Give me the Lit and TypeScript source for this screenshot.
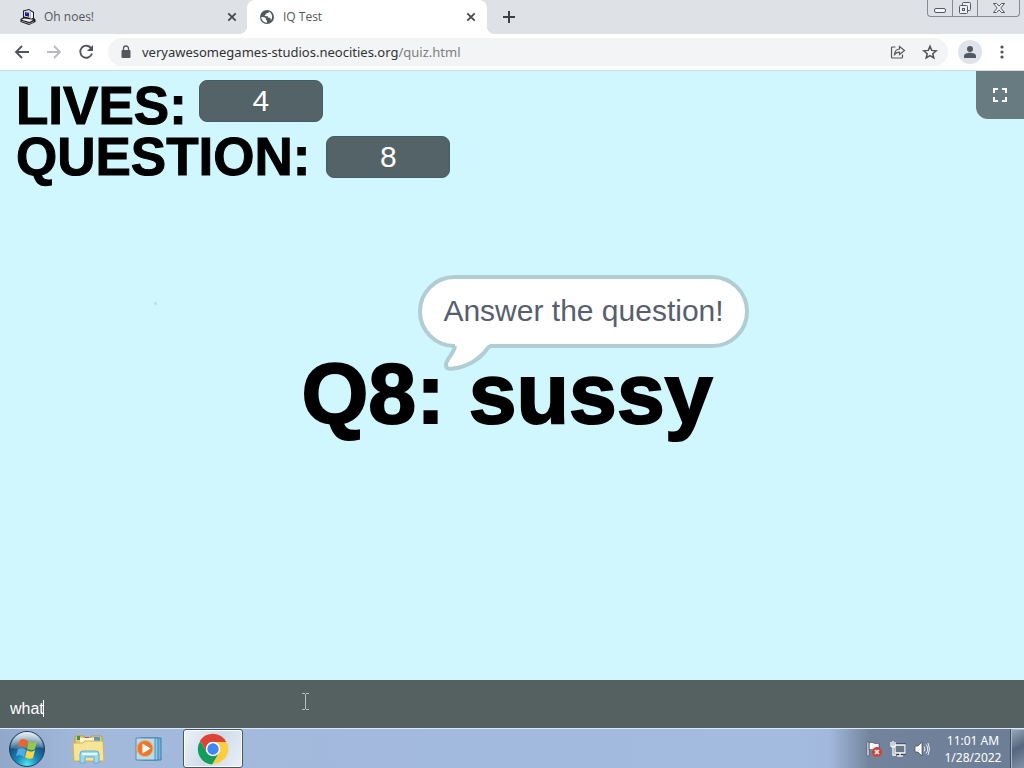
import { LitElement, html, css, svg } from "lit";
import { customElement, state } from "lit/decorators.js";

const closeIcon = html`<svg width="16" height="16" viewBox="0 0 16 16"><path d="M4.3 4.3l7.4 7.4M11.7 4.3l-7.4 7.4" stroke="#45484c" stroke-width="1.8"/></svg>`;

@customElement("browser-tabs")
class BrowserTabs extends LitElement {
  static styles = css`
    :host { display: flex; align-items: stretch; height: 34px; background: #dee1e6; color: #54575b;
      font: 12px/16px "Open Sans", "Noto Sans", sans-serif; }
    button { border: 0; padding: 0; margin: 0; background: none; font: inherit; color: inherit; display: flex; align-items: center; justify-content: center; }
    .tab { display: flex; align-items: center; gap: 8px; flex: 0 1 240px; min-width: 80px; box-sizing: border-box; padding: 0 8px 0 12px; }
    .first { flex-basis: 247px; padding-left: 20px; padding-right: 7px; }
    .active { background: #fff; border-radius: 8px 8px 0 0; position: relative; }
    .active::before, .active::after { content: ""; position: absolute; bottom: 0; width: 8px; height: 8px; }
    .active::before { left: -8px; background: radial-gradient(circle at 0 0, transparent 8px, #fff 8px); }
    .active::after { right: -8px; background: radial-gradient(circle at 100% 0, transparent 8px, #fff 8px); }
    .title { flex: 1; text-align: left; white-space: nowrap; overflow: hidden; }
    .new { width: 28px; margin-left: 8px; }
    .spacer { flex: 1; }
    .window { display: flex; height: 16px; margin-right: 4px; border: 1px solid #868a91; border-top: 0; border-radius: 0 0 4px 4px; }
    .window button { width: 25px; border-right: 1px solid #868a91; }
    .window button:last-child { width: 41px; border-right: 0; }
    svg { display: block; flex: none; }
  `;
  render() {
    return html`
      <div class="tab first">
        <svg width="16" height="16" viewBox="0 0 16 16">
          <path d="M3 1.500L9 0l5 3v6l1.500 1.500V13L9 16 .5 13v-3L3 8.500z" fill="#1c1c24"/>
          <path d="M4 2.200L9 1l1.500 1v7L4 7.500z" fill="#dcdce0"/><path d="M10.500 2L13 3.700v5L10.500 10z" fill="#f4f4f6"/>
          <path d="M5 3l4 .7v4L5 6.800z" fill="#181893"/><path d="M6 4h1.500" stroke="#8d8de0"/>
          <path d="M1.500 10.700L4 9.500l9.500 1.300L9.500 13z" fill="#eeeef1"/><path d="M1.500 11.800l8 2.500 4.500-2v.8L9.500 15l-8-2.500z" fill="#b8b8c0"/>
        </svg>
        <span class="title">Oh noes!</span><button aria-label="Close Oh noes!">${closeIcon}</button>
      </div>
      <div class="tab active">
        <svg width="16" height="16" viewBox="0 0 16 16"><circle cx="8" cy="8" r="7" fill="#54585d"/>
          <path d="M2.200 8c2 .1 3.600 .1 4.400 1 .5.600-.1 1.600.8 2.100.6.300.6 1.200.5 2.700A5.900 5.900 0 0 1 2.200 8zM10 2.500c-.1 1.200-.8 1.500-1.800 1.600-.9 0-1 .6-1 1.300-.6.200-1.400.1-1.500.9 0 .9 1 .9 2.200.9 1.300 0 1.400.7 1.400 1.600.8.100 2-.1 2.300.8.200.6.200 1.100.2 1.800A5.900 5.900 0 0 0 10 2.500z" fill="#fff"/></svg>
        <span class="title">IQ Test</span><button aria-label="Close IQ Test">${closeIcon}</button>
      </div>
      <button class="new" aria-label="New tab"><svg width="16" height="16" viewBox="0 0 16 16"><path d="M8 2v12M2 8h12" stroke="#3c4043" stroke-width="2"/></svg></button>
      <div class="spacer"></div>
      <div class="window">
        <button aria-label="Minimize"><svg width="14" height="16" viewBox="0 0 14 16"><rect x="1.500" y="8.500" width="11" height="4" rx="1.500" fill="#f4f5f7" stroke="#555961"/></svg></button>
        <button aria-label="Restore"><svg width="14" height="16" viewBox="0 0 14 16" fill="#eef0f3" stroke="#555961"><rect x="4.500" y="2.500" width="8" height="8" rx="1"/><rect x="1.500" y="5.500" width="8" height="8" rx="1"/><rect x="4.500" y="8.500" width="2" height="2"/></svg></button>
        <button aria-label="Close window"><svg width="14" height="16" viewBox="0 0 14 16"><path d="M1.500 3.500h3L7 6.200l2.500-2.700h3L8.800 8l3.700 4.500h-3L7 9.800l-2.500 2.700h-3L5.200 8z" fill="#f4f5f7" stroke="#555961"/></svg></button>
      </div>`;
  }
}

@customElement("browser-toolbar")
class BrowserToolbar extends LitElement {
  static styles = css`
    :host { display: flex; align-items: center; height: 36px; padding: 0 10px; background: #fff; border-bottom: 1px solid #d5dfe1; }
    button { border: 0; padding: 0; background: none; width: 24px; height: 24px; display: flex; align-items: center; justify-content: center; }
    .nav { display: flex; gap: 8px; margin-right: 10px; }
    .omni { flex: 1; min-width: 0; height: 28px; border-radius: 14px; background: #f3f4f5; display: flex; align-items: center; padding: 0 6px 0 10px; gap: 8px; }
    .url { flex: 1; min-width: 0; overflow: hidden; color: #303236; text-decoration: none; white-space: nowrap; font: 13px/18px "Noto Sans", "Open Sans", sans-serif; }
    .path { color: #7b7e82; }
    .person { margin: 0 8px 0 10px; border-radius: 12px; background: #dfe3ea; }
    svg { display: block; flex: none; }
  `;
  render() {
    return html`
      <div class="nav">
        <button aria-label="Back"><svg width="18" height="18" viewBox="0 0 18 18" fill="none" stroke="#505357" stroke-width="1.800"><path d="M16 9H3M9 3L3 9l6 6"/></svg></button>
        <button aria-label="Forward" disabled><svg width="18" height="18" viewBox="0 0 18 18" fill="none" stroke="#b8babd" stroke-width="1.800"><path d="M2 9h13M9 3l6 6-6 6"/></svg></button>
        <button aria-label="Reload"><svg width="18" height="18" viewBox="0 0 18 18"><path d="M14.200 5.300A6 6 0 1 0 15 10.500" fill="none" stroke="#505357" stroke-width="1.800"/><path d="M16 2v6h-6z" fill="#505357"/></svg></button>
      </div>
      <div class="omni">
        <svg width="16" height="16" viewBox="0 0 16 16"><rect x="3.500" y="6" width="9" height="8" rx="1" fill="#54575b"/><path d="M5.500 7V4.500a2.500 2.500 0 0 1 5 0V7" stroke="#54575b" stroke-width="1.300" fill="none"/></svg>
        <a class="url" href="#quiz">veryawesomegames-studios.neocities.org<span class="path">/quiz.html</span></a>
        <button aria-label="Share"><svg width="16" height="16" viewBox="0 0 16 16" fill="none" stroke="#55585c" stroke-width="1.200"><path d="M5.500 3H2.500q-1 0-1 1v9q0 1 1 1h9q1 0 1-1v-2.500"/><path d="M4.500 10.500c.3-3.500 2-5.300 5-5.500V2.500L14.500 6.500l-5 4V8.200c-2.200 0-3.600.8-5 2.300z"/></svg></button>
        <button aria-label="Bookmark"><svg width="16" height="16" viewBox="0 0 16 16" fill="none" stroke="#505357" stroke-width="1.500"><path d="M8 2.300l1.700 4.100 4.500.4-3.400 2.900 1 4.300L8 11.700 4.200 14l1-4.300-3.400-2.900 4.500-.4z"/></svg></button>
      </div>
      <button class="person" aria-label="Profile"><svg width="16" height="16" viewBox="0 0 16 16" fill="#525963"><circle cx="8" cy="5" r="3"/><path d="M2 14v-2c0-2 3-3.200 6-3.200s6 1.200 6 3.200v2z"/></svg></button>
      <button aria-label="Menu"><svg width="4" height="16" viewBox="0 0 4 16" fill="#505357"><circle cx="2" cy="3" r="1.600"/><circle cx="2" cy="8" r="1.600"/><circle cx="2" cy="13" r="1.600"/></svg></button>`;
  }
}

@customElement("quiz-stage")
class QuizStage extends LitElement {
  @state() lives = 4;
  @state() question = 8;
  static styles = css`
    :host { display: flex; flex-direction: column; flex: 1; min-height: 0; background: #d0f6fe; position: relative; overflow: hidden; }
    .stats { padding: 9px 16px 0; color: #000; font: bold 53px/50px "Liberation Sans", Arial, sans-serif; }
    .stat { display: flex; align-items: center; gap: 12px; height: 52px; -webkit-text-stroke: 1px #000; }
    .value { box-sizing: border-box; width: 124px; height: 42px; border: 1px solid #455d66; border-radius: 8px; background: #536367; color: #fff;
      text-align: center; font: 30px/40px "Liberation Sans", Arial, sans-serif; -webkit-text-stroke: 0; }
    .stat:first-child .value { align-self: flex-start; }
    .stat:last-child { gap: 16px; height: 50px; }
    .full { position: absolute; top: 0; right: 0; width: 48px; height: 48px; padding: 0; border: 0; border-radius: 0 0 0 12px; background: #687b80; display: flex; align-items: center; justify-content: center; }
    .center { flex: 1; display: flex; justify-content: center; align-items: flex-start; padding: 163px 10px 0 0; }
    .prompt { position: relative; }
    h1 { margin: 0; color: #000; font: bold 86px/96px "Liberation Sans", Arial, sans-serif; white-space: nowrap; -webkit-text-stroke: 2px #000; }
    .bubble { position: absolute; left: 117px; bottom: 93px; box-sizing: border-box; height: 73px; padding: 0 21px; border: 4px solid #b0cdd2; border-radius: 37px;
      background: #fff; color: #575e6e; font: 30px/64px "Liberation Sans", Arial, sans-serif; white-space: nowrap; }
    .tail { position: absolute; left: 20px; top: 64px; }
    .speck { position: absolute; left: 15%; top: 38%; width: 3px; height: 3px; border-radius: 2px; background: #b8dfe8; }
  `;
  render() {
    return html`
      <div class="stats">
        <div class="stat"><span>LIVES:</span><span class="value">${this.lives}</span></div>
        <div class="stat"><span>QUESTION:</span><span class="value">${this.question}</span></div>
      </div>
      <div class="center">
        <div class="prompt">
          <h1>Q${this.question}: sussy</h1>
          <div class="bubble">Answer the question!
            <svg class="tail" width="54" height="30" viewBox="0 0 54 30"><path d="M13 3C12 11 4 16 4 22c0 4 3 4 7 3C25 24 38 17 46 5l3-5H13z" fill="#fff"/><path d="M13 3C12 11 4 16 4 22c0 4 3 4 7 3.500C25 24 38 16 45 6q2-3 5-3" fill="none" stroke="#b0cdd2" stroke-width="4"/></svg>
          </div>
        </div>
      </div>
      <span class="speck"></span>
      <button class="full" aria-label="Full screen"><svg width="16" height="16" viewBox="0 0 16 16" fill="none" stroke="#fff" stroke-width="2"><path d="M2 6V2h4M10 2h4v4M14 10v4h-4M6 14H2v-4"/></svg></button>`;
  }
}

@customElement("answer-bar")
class AnswerBar extends LitElement {
  static styles = css`
    :host { display: block; height: 48px; background: #546160; position: relative; box-sizing: border-box; padding: 17px 10px 7px; }
    input { display: block; width: 100%; height: 24px; padding: 0; border: 0; outline: 0; background: none; color: #fff; font: 16px/24px "Liberation Sans", Arial, sans-serif; }
    .caret { position: absolute; left: 43px; top: 20px; width: 1px; height: 17px; background: #fff; }
    .pointer { position: absolute; left: 301px; top: 13px; }
  `;
  render() {
    return html`<input aria-label="Answer" value="what" /><span class="caret"></span>
      <svg class="pointer" width="9" height="17" viewBox="0 0 9 17"><path d="M1 .5h3M5 .5h3M4.500 1v15M1 16.500h3M5 16.500h3" stroke="#b4c0bf" fill="none"/></svg>`;
  }
}

const sector = (angle: number, color: string) =>
  svg`<path d="M16 16m-6.100 3.500L3 7.500A15.200 15.200 0 0 1 29.200 8.900H16A7.100 7.100 0 0 0 9.900 19.500z" fill=${color} transform="rotate(${angle} 16 16)"/>`;

@customElement("task-bar")
class TaskBar extends LitElement {
  static styles = css`
    :host { display: flex; align-items: stretch; height: 40px; box-sizing: border-box; border-top: 1px solid #dce9fb; color: #fff;
      background: linear-gradient(90deg, #92a8cb, #a3b9dc 8%, #a2bbdf 78%, #a2b9dd 81%, #72839b 85%, #6c7e95); }
    button { border: 0; padding: 0; background: none; display: flex; align-items: center; justify-content: center; }
    .start { width: 54px; }
    .explorer { width: 70px; }
    .media { width: 50px; margin-right: 9px; }
    .chrome { width: 60px; border: 1px solid #46566e; border-radius: 3px; background: linear-gradient(120deg, #edf2f8, #cfdbe9 50%, #eaf0f7); box-shadow: inset 0 0 0 1px #fff; }
    .spacer { flex: 1; }
    .tray { display: flex; align-items: center; gap: 8px; }
    .clock { width: 74px; margin-left: 6px; text-align: center; font: 12px/17px "Noto Sans", "Open Sans", sans-serif; align-self: center; }
    .desktop { width: 14px; border-left: 1px solid #3f4d60; background: linear-gradient(150deg, #9aa9bb, #56677d 50%, #8092a8); box-shadow: inset 1px 1px 0 #a7b7ca; }
    svg { display: block; flex: none; }
  `;
  render() {
    return html`
      <button class="start" aria-label="Start"><svg width="38" height="38" viewBox="0 0 38 38">
        <defs><radialGradient id="orb" cx=".5" cy=".95" r=".9"><stop offset="0" stop-color="#55e5ef"/><stop offset=".35" stop-color="#168ab8"/><stop offset=".7" stop-color="#16527f"/><stop offset="1" stop-color="#7da4bd"/></radialGradient>
        <linearGradient id="shine" x2="0" y2="1"><stop offset="0" stop-color="#fff" stop-opacity=".8"/><stop offset="1" stop-color="#fff" stop-opacity=".15"/></linearGradient></defs>
        <circle cx="19" cy="19" r="17.500" fill="url(#orb)" stroke="#283c5d"/><path d="M3 18a16 16 0 0 1 32 0c-9-3-20 3-32 0z" fill="url(#shine)"/>
        <path d="M12 10c3-2 5-1 8 1l-2 7c-3-2-5-2-8-1z" fill="#ee632b"/><path d="M21 11c3 2 5 2 8 0l-2 8c-3 2-5 1-8 0z" fill="#97c947"/><path d="M10 19c3-1 5-1 8 1l-2 7c-3-2-5-2-8-1z" fill="#51a9e7"/><path d="M19 20c3 2 5 2 8 0l-2 8c-3 1-5 1-8-1z" fill="#ffd443"/></svg></button>
      <button class="explorer" aria-label="Explorer"><svg width="34" height="32" viewBox="0 0 34 32">
        <path d="M3 8V3h9l2 3h5V3h11v25H3z" fill="#e9cd70" stroke="#ba9b46"/><path d="M5 3h3v4H5z" fill="#389657"/><path d="M13 4h4v4h-4z" fill="#d84b35"/><path d="M22 4h6v4h-6z" fill="#5398d3"/><path d="M8 5h14v8H8z" fill="#fff7cc"/><path d="M1 10h10l2-2h18l1 20H2z" fill="#f7e595" stroke="#d0b35d"/>
        <path d="M8 30V21q0-3 3-3h13q3 0 3 3v9h-5v-6h-9v6z" fill="#9bd9f5" stroke="#5eadd6"/><path d="M10 21h15" stroke="#e2fbff" stroke-width="2"/></svg></button>
      <button class="media" aria-label="Media Player"><svg width="30" height="28" viewBox="0 0 30 28"><path d="M9 3h18v22H9z" fill="#72b6dc" stroke="#397fae"/><path d="M6 3h18v22H6z" fill="#91c9e7" stroke="#4385af"/><path d="M2 3h19v22H2z" fill="#b7dced" stroke="#568cb1"/><circle cx="11" cy="13.500" r="8" fill="#ec762b" stroke="#f7ad6d"/><path d="M8.500 8.500l8 5-8 5z" fill="#fff"/></svg></button>
      <button class="chrome" aria-label="Chrome"><svg width="32" height="32" viewBox="0 0 32 32">
        ${sector(0, "#db4437")}${sector(120, "#ffcd40")}${sector(240, "#129d58")}<circle cx="16" cy="16" r="7.200" fill="#fff"/><circle cx="16" cy="16" r="5.700" fill="#4285f4"/></svg></button>
      <div class="spacer"></div>
      <div class="tray">
        <button aria-label="Action Center"><svg width="16" height="18" viewBox="0 0 16 18"><path d="M1 2v14h2V2zM3 3c4-2 5 2 10 0v7c-5 2-6-2-10 0z" fill="#fff" stroke="#434e5e" stroke-width=".7"/><circle cx="11" cy="12" r="5" fill="#d24239"/><path d="M9 10l4 4M13 10l-4 4" stroke="#fff" stroke-width="1.500"/></svg></button>
        <button aria-label="Network"><svg width="16" height="16" viewBox="0 0 16 16"><path d="M5 4h10v8H5zM7 15h6M10 12v3" fill="#566576" stroke="#27313d" stroke-width="3"/><path d="M5 4h10v8H5zM7 15h6M10 12v3M1 1v4q2 2 4 0V1M3 6v8h3M3 0v5" fill="#65788b" stroke="#fff" stroke-width="1.300"/></svg></button>
        <button aria-label="Volume"><svg width="16" height="16" viewBox="0 0 16 16"><path d="M1 5h3l4-4v14l-4-4H1z" fill="#fff" stroke="#38485b" stroke-width=".7"/><path d="M10 5.500q2 2.500 0 5M12 3.500q3.500 4.500 0 9M14 2q3 6 0 12" fill="none" stroke="#e9eff7"/></svg></button>
      </div>
      <div class="clock"><div>11:01 AM</div><div>1/28/2022</div></div>
      <button class="desktop" aria-label="Show desktop"></button>`;
  }
}

@customElement("app-root")
class AppRoot extends LitElement {
  static styles = css`:host { display: flex; flex-direction: column; height: 100vh; min-height: 560px; overflow: hidden; }`;
  render() {
    return html`<browser-tabs></browser-tabs><browser-toolbar></browser-toolbar><quiz-stage></quiz-stage><answer-bar></answer-bar><task-bar></task-bar>`;
  }
}
